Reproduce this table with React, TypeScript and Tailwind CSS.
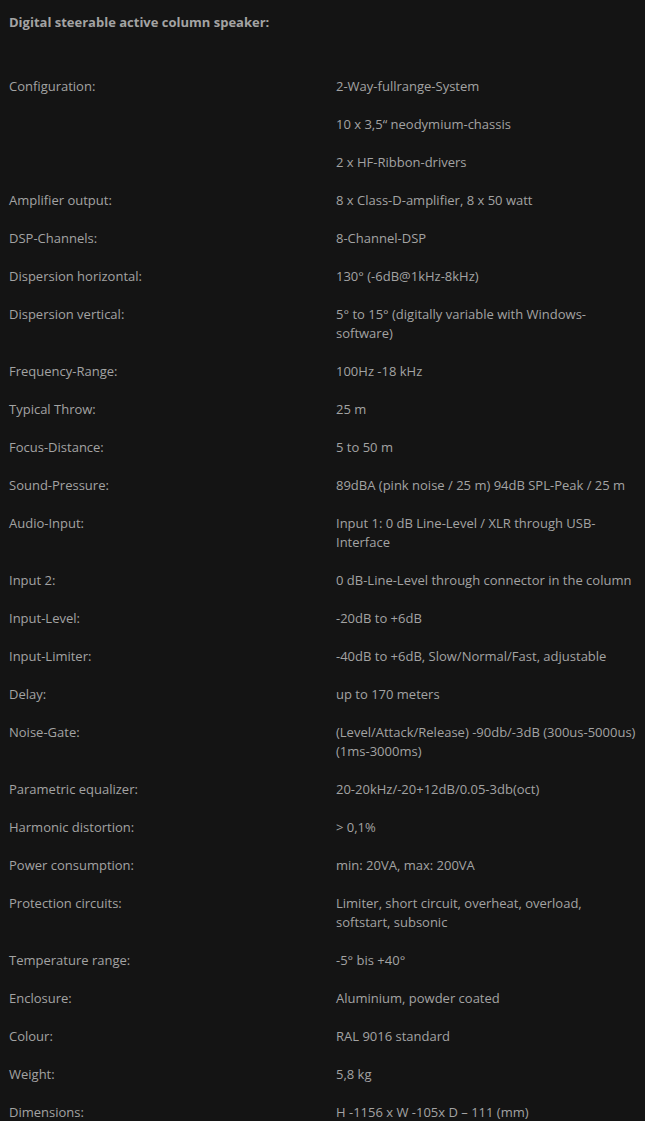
const rows: [string, string[]][] = [
  ["Configuration:", ["2-Way-fullrange-System", "10 x 3,5“ neodymium-chassis", "2 x HF-Ribbon-drivers"]],
  ["Amplifier output:", ["8 x Class-D-amplifier, 8 x 50 watt"]],
  ["DSP-Channels:", ["8-Channel-DSP"]],
  ["Dispersion horizontal:", ["130° (-6dB@1kHz-8kHz)"]],
  ["Dispersion vertical:", ["5° to 15° (digitally variable with Windows-\nsoftware)"]],
  ["Frequency-Range:", ["100Hz -18 kHz"]],
  ["Typical Throw:", ["25 m"]],
  ["Focus-Distance:", ["5 to 50 m"]],
  ["Sound-Pressure:", ["89dBA (pink noise / 25 m) 94dB SPL-Peak / 25 m"]],
  ["Audio-Input:", ["Input 1: 0 dB Line-Level / XLR through USB-\nInterface"]],
  ["Input 2:", ["0 dB-Line-Level through connector in the column"]],
  ["Input-Level:", ["-20dB to +6dB"]],
  ["Input-Limiter:", ["-40dB to +6dB, Slow/Normal/Fast, adjustable"]],
  ["Delay:", ["up to 170 meters"]],
  ["Noise-Gate:", ["(Level/Attack/Release) -90db/-3dB (300us-5000us)\n(1ms-3000ms)"]],
  ["Parametric equalizer:", ["20-20kHz/-20+12dB/0.05-3db(oct)"]],
  ["Harmonic distortion:", ["> 0,1%"]],
  ["Power consumption:", ["min: 20VA, max: 200VA"]],
  ["Protection circuits:", ["Limiter, short circuit, overheat, overload,\nsoftstart, subsonic"]],
  ["Temperature range:", ["-5° bis +40°"]],
  ["Enclosure:", ["Aluminium, powder coated"]],
  ["Colour:", ["RAL 9016 standard"]],
  ["Weight:", ["5,8 kg"]],
  ["Dimensions:", ["H -1156 x W -105x D – 111 (mm)"]],
];

export default function App() {
  return (
    <div className="min-h-screen bg-[#141414] px-[9px] pt-[13px] font-['Open_Sans',sans-serif] text-[13px] leading-[19px] text-[#a3a3a3]">
      <p className="mb-[45px] font-bold">Digital steerable active column speaker:</p>
      <div className="grid grid-cols-[327px_1fr]">
        {rows.map(([label, values]) => (
          <div key={label} className="contents">
            <p className="mb-[19px]">{label}</p>
            <div>
              {values.map((v) => (
                <p key={v} className="mb-[19px] whitespace-pre-line">
                  {v}
                </p>
              ))}
            </div>
          </div>
        ))}
      </div>
    </div>
  );
}
